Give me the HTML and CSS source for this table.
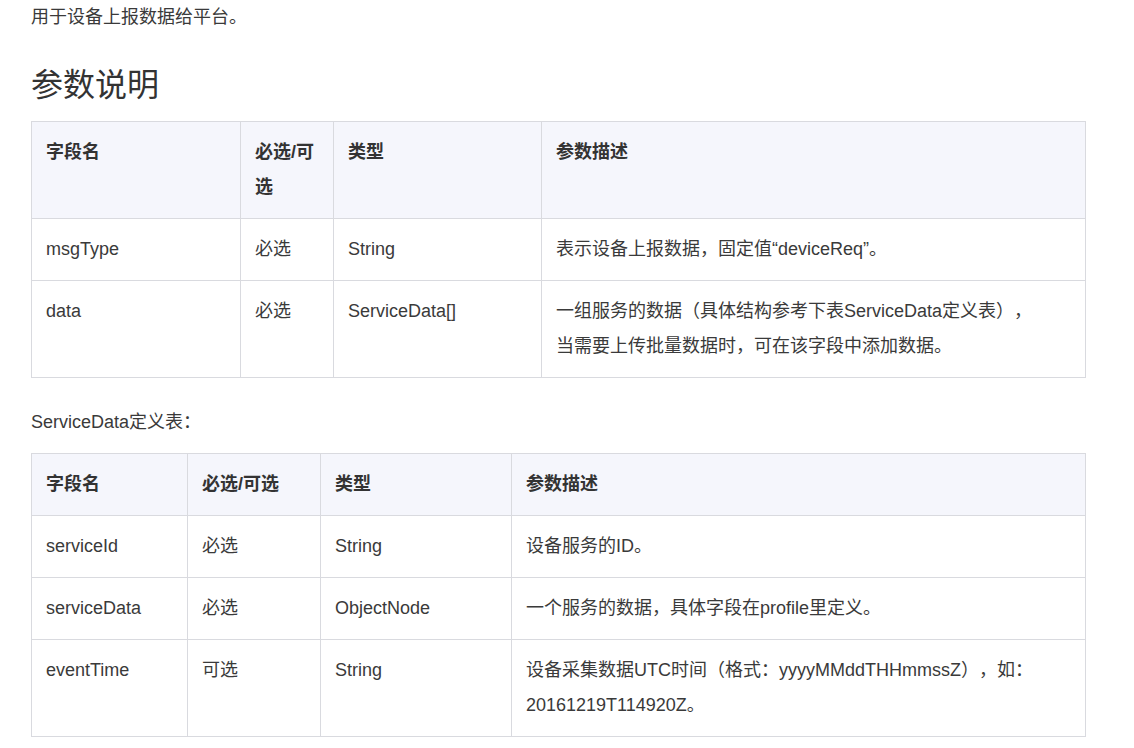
FILE: index.html
```html
<!DOCTYPE html>
<html lang="zh-CN">
<head>
<meta charset="utf-8">
<link rel="stylesheet" href="styles.css">
</head>
<body>
<div class="doc">
  <p class="intro">用于设备上报数据给平台。</p>
  <h2 class="title">参数说明</h2>
  <table class="params t1">
    <colgroup>
      <col class="c1"><col class="c2"><col class="c3"><col class="c4">
    </colgroup>
    <thead>
      <tr><th>字段名</th><th>必选/可选</th><th>类型</th><th>参数描述</th></tr>
    </thead>
    <tbody>
      <tr><td>msgType</td><td>必选</td><td>String</td><td>表示设备上报数据，固定值“deviceReq”。</td></tr>
      <tr><td>data</td><td>必选</td><td>ServiceData[]</td><td>一组服务的数据（具体结构参考下表ServiceData定义表），<br>当需要上传批量数据时，可在该字段中添加数据。</td></tr>
    </tbody>
  </table>
  <p class="caption">ServiceData定义表：</p>
  <table class="params t2">
    <colgroup>
      <col class="c1"><col class="c2"><col class="c3"><col class="c4">
    </colgroup>
    <thead>
      <tr><th>字段名</th><th>必选/可选</th><th>类型</th><th>参数描述</th></tr>
    </thead>
    <tbody>
      <tr><td>serviceId</td><td>必选</td><td>String</td><td>设备服务的ID。</td></tr>
      <tr><td>serviceData</td><td>必选</td><td>ObjectNode</td><td>一个服务的数据，具体字段在profile里定义。</td></tr>
      <tr><td>eventTime</td><td>可选</td><td>String</td><td>设备采集数据UTC时间（格式：yyyyMMddTHHmmssZ），如：20161219T114920Z。</td></tr>
    </tbody>
  </table>
</div>
</body>
</html>
```
FILE: styles.css
```css
html, body {
  margin: 0;
  padding: 0;
  background: #ffffff;
}
body {
  font-family: "Liberation Sans", "Noto Sans CJK SC", sans-serif;
  font-size: 18px;
  color: #3a3a3a;
  text-spacing-trim: space-all;
}
.doc {
  padding-left: 31px;
  width: 1055px;
}
.intro {
  margin: 0;
  line-height: 35px;
}
.title {
  margin: 26px 0 12px;
  font-size: 32px;
  line-height: 48px;
  font-weight: normal;
  color: #333333;
}
.caption {
  margin: 27px 0 13px;
  line-height: 35px;
}
.params {
  width: 1055px;
  border-collapse: collapse;
  table-layout: fixed;
}
.params th,
.params td {
  border: 1px solid #d9dadf;
  padding: 13px 14px;
  line-height: 35px;
  text-align: left;
  vertical-align: top;
}
.params th {
  background: #f5f6fc;
  font-weight: bold;
  color: #333333;
}
.t1 .c1 { width: 209px; }
.t1 .c2 { width: 93px; }
.t1 .c3 { width: 208px; }
.t2 .c1 { width: 156px; }
.t2 .c2 { width: 133px; }
.t2 .c3 { width: 191px; }
```
